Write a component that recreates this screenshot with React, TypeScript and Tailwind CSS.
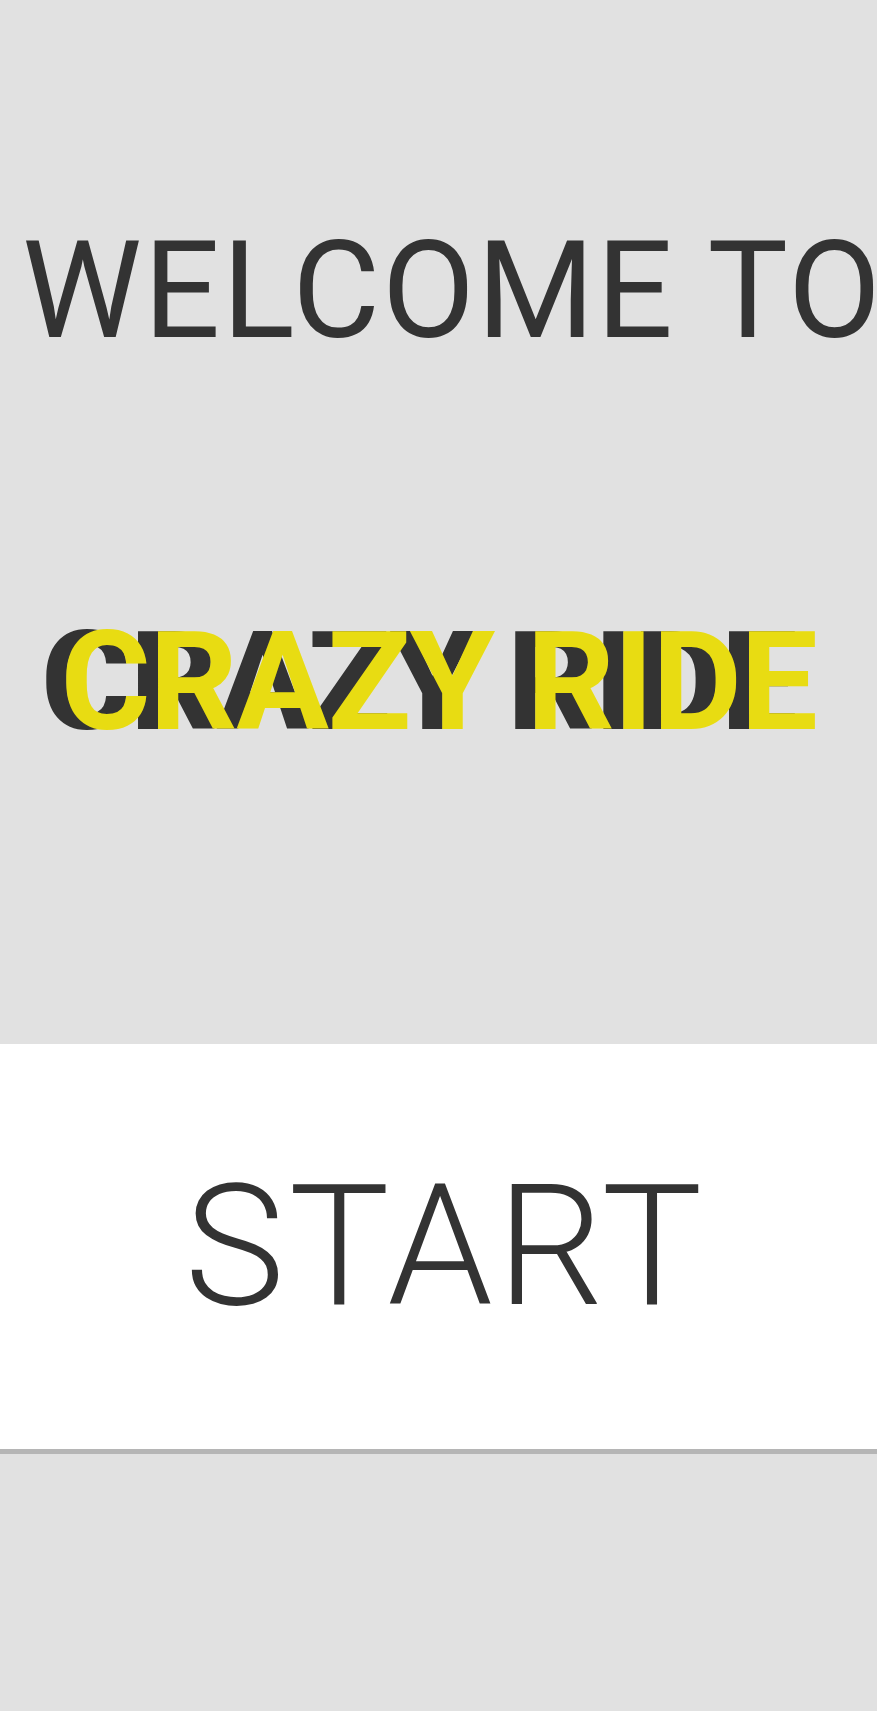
export default function App() {
  return (
    <div className="min-h-screen w-full bg-[#e1e1e1] font-['Roboto',sans-serif] text-[#333333] overflow-hidden">
      {/* Title area */}
      <div className="h-[1044px] pt-[224px]">
        <h1 className="pl-[22px] whitespace-nowrap text-[135px] leading-none font-normal tracking-[1.8px]">
          WELCOME TO
        </h1>
        <h2 className="mt-[254px] text-center whitespace-nowrap text-[138px] leading-none font-bold tracking-[-1.5px] text-[#e8dc12] [text-shadow:-20px_0_0_#333333]">
          CRAZY RIDE
        </h2>
      </div>

      {/* Start button */}
      <button className="flex h-[410px] w-full items-center justify-center bg-white border-b-[5px] border-[#b5b5b5]">
        <span className="pl-[14px] text-[169px] leading-none font-light tracking-[4px] text-[#333333]">START</span>
      </button>
    </div>
  );
}
